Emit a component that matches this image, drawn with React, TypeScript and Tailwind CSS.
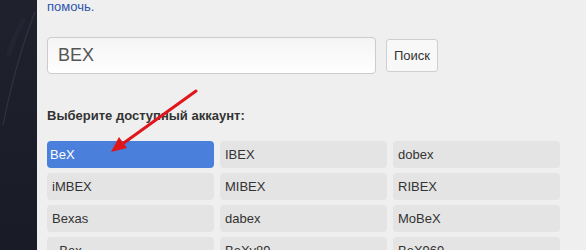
import React from "react";

const accounts = [
  "BeX", "IBEX", "dobex",
  "iMBEX", "MIBEX", "RIBEX",
  "Bexas", "dabex", "MoBeX",
  "_Bex", "BeXy89", "BeX969",
];

export default function App() {
  return (
    <div className="relative flex h-[250px] w-[586px] overflow-hidden bg-[#efefef] font-['Liberation_Sans',Arial,sans-serif]">
      {/* dark backdrop strip on the left */}
      <div className="relative h-full w-[37px] shrink-0 bg-gradient-to-b from-[#1f212d] to-[#191b26]">
        <svg className="absolute inset-0" width="37" height="250" viewBox="0 0 37 250">
          <path d="M35 12 C 24 40, 12 80, 3 125" stroke="#3b3f52" strokeWidth="1.2" fill="none" opacity="0.6" />
          <path d="M24 18 C 17 32, 12 44, 8 56" stroke="#2b2e3d" strokeWidth="5" fill="none" opacity="0.4" />
        </svg>
      </div>

      <div className="flex flex-1 flex-col pl-[10px]">
        <div className="-mt-[2px] text-[13px] leading-[18px] text-[#2f54ad]">помочь.</div>

        <div className="mt-[21px] flex items-center gap-[10px]">
          <div className="flex h-[37px] w-[329px] items-center rounded-[4px] border border-[#cccccc] bg-gradient-to-b from-[#f4f4f4] to-white pl-[10px] text-[18px] text-[#555555]">
            BEX
          </div>
          <button
            type="button"
            className="h-[33px] w-[52px] rounded-[3px] border border-[#cfcfcf] bg-[#f8f8f8] text-[13px] text-[#333333]"
          >
            Поиск
          </button>
        </div>

        <div className="mt-[33px] text-[13px] font-bold leading-[18px] text-[#333333]">
          Выберите доступный аккаунт:
        </div>

        <div className="mt-[16px] grid grid-cols-[167px_167px_167px] gap-x-[6px] gap-y-[5px]">
          {accounts.map((name, i) => (
            <div
              key={name}
              className={
                i === 0
                  ? "flex h-[27px] items-center rounded-[4px] bg-[#4a80dc] pl-[3px] text-[13px] text-white"
                  : "flex h-[27px] items-center rounded-[4px] bg-[#e4e4e4] pl-[5px] text-[13px] text-[#333333]"
              }
            >
              {name}
            </div>
          ))}
        </div>
      </div>

      {/* red pointer arrow */}
      <svg className="pointer-events-none absolute left-0 top-0" width="586" height="250" viewBox="0 0 586 250">
        <line x1="196" y1="91" x2="121" y2="145" stroke="#e0161b" strokeWidth="3" strokeLinecap="round" />
        <polygon points="111,152 119,137 127,148" fill="#e0161b" />
      </svg>
    </div>
  );
}
